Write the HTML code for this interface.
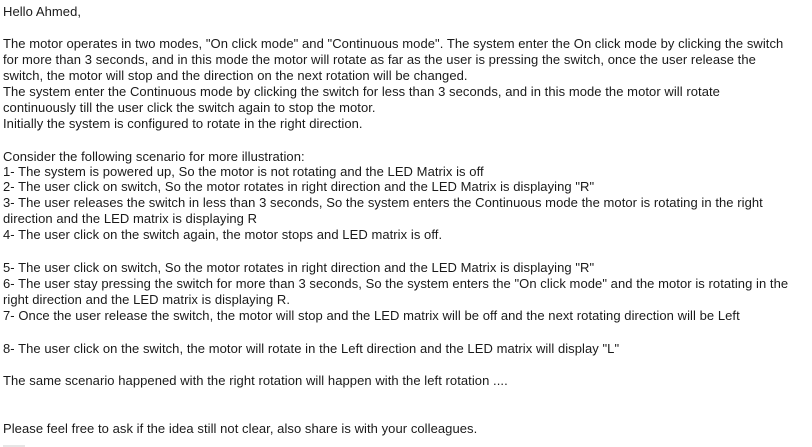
<!DOCTYPE html>
<html><head><meta charset="utf-8"><style>
html,body{margin:0;padding:0;background:#fff;width:812px;height:447px;overflow:hidden;position:relative}
div.l{position:absolute;left:3px;font-family:"Liberation Sans",Arial,sans-serif;font-size:13px;letter-spacing:0.06px;line-height:14px;color:#1a1a1a;white-space:nowrap}
</style></head><body>
<div class="l" style="top:5px">Hello Ahmed,</div>
<div class="l" style="top:37px">The motor operates in two modes, "On click mode" and "Continuous mode". The system enter the On click mode by clicking the switch</div>
<div class="l" style="top:53px">for more than 3 seconds, and in this mode the motor will rotate as far as the user is pressing the switch, once the user release the</div>
<div class="l" style="top:69px">switch, the motor will stop and the direction on the next rotation will be changed.</div>
<div class="l" style="top:85px">The system enter the Continuous mode by clicking the switch for less than 3 seconds, and in this mode the motor will rotate</div>
<div class="l" style="top:101px">continuously till the user click the switch again to stop the motor.</div>
<div class="l" style="top:117px">Initially the system is configured to rotate in the right direction.</div>
<div class="l" style="top:150px">Consider the following scenario for more illustration:</div>
<div class="l" style="top:165px">1- The system is powered up, So the motor is not rotating and the LED Matrix is off</div>
<div class="l" style="top:180px">2- The user click on switch, So the motor rotates in right direction and the LED Matrix is displaying "R"</div>
<div class="l" style="top:196px">3- The user releases the switch in less than 3 seconds, So the system enters the Continuous mode the motor is rotating in the right</div>
<div class="l" style="top:212px">direction and the LED matrix is displaying R</div>
<div class="l" style="top:228px">4- The user click on the switch again, the motor stops and LED matrix is off.</div>
<div class="l" style="top:261px">5- The user click on switch, So the motor rotates in right direction and the LED Matrix is displaying "R"</div>
<div class="l" style="top:277px">6- The user stay pressing the switch for more than 3 seconds, So the system enters the "On click mode" and the motor is rotating in the</div>
<div class="l" style="top:293px">right direction and the LED matrix is displaying R.</div>
<div class="l" style="top:309px">7- Once the user release the switch, the motor will stop and the LED matrix will be off and the next rotating direction will be Left</div>
<div class="l" style="top:342px">8- The user click on the switch, the motor will rotate in the Left direction and the LED matrix will display "L"</div>
<div class="l" style="top:374px">The same scenario happened with the right rotation will happen with the left rotation ....</div>
<div class="l" style="top:422px">Please feel free to ask if the idea still not clear, also share is with your colleagues.</div>
<div style="position:absolute;left:3px;top:445px;width:22px;height:2px;background:#e6e6e6"></div>
</body></html>
